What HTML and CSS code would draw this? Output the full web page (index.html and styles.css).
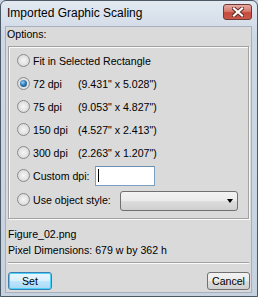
FILE: index.html
```html
<!DOCTYPE html>
<html>
<head>
<meta charset="utf-8">
<link rel="stylesheet" href="styles.css">
</head>
<body>
<div class="window">
  <div class="titlebar">
    <span class="title">Imported Graphic Scaling</span>
    <span class="close">
      <svg width="12" height="10" viewBox="0 0 12 10">
        <path d="M2 1.5 L10 8.5 M10 1.5 L2 8.5" stroke="#5b2a25" stroke-width="4" stroke-linecap="square"/>
        <path d="M2 1.5 L10 8.5 M10 1.5 L2 8.5" stroke="#ffffff" stroke-width="2.2" stroke-linecap="square"/>
      </svg>
    </span>
  </div>
  <div class="client">
    <div class="label">Options:</div>
    <div class="group">
      <div class="row"><span class="radio"></span><span>Fit in Selected Rectangle</span></div>
      <div class="row"><span class="radio checked"></span><span class="dpi">72 dpi</span><span>(9.431" x 5.028")</span></div>
      <div class="row"><span class="radio"></span><span class="dpi">75 dpi</span><span>(9.053" x 4.827")</span></div>
      <div class="row"><span class="radio"></span><span class="dpi">150 dpi</span><span>(4.527" x 2.413")</span></div>
      <div class="row"><span class="radio"></span><span class="dpi">300 dpi</span><span>(2.263" x 1.207")</span></div>
      <div class="row"><span class="radio"></span><span>Custom dpi:</span><span class="textbox"><span class="caret"></span></span></div>
      <div class="row last"><span class="radio"></span><span>Use object style:</span><span class="combo"><span class="arrow"></span></span></div>
    </div>
    <div class="info">
      <div>Figure_02.png</div>
      <div>Pixel Dimensions: 679 w by 362 h</div>
    </div>
    <div class="sep"></div>
    <div class="buttons">
      <span class="btn default">Set</span>
      <span class="btn">Cancel</span>
    </div>
  </div>
</div>
</body>
</html>
```
FILE: styles.css
```css
html, body {
  margin: 0;
  padding: 0;
  background: #c9d5e2;
}
body {
  font-family: "Liberation Sans", Arial, sans-serif;
  font-size: 10.6px;
  color: #000;
}
.window {
  width: 258px;
  height: 297px;
  box-sizing: border-box;
  border: 1px solid #4b5866;
  border-radius: 6px 6px 0 0;
  background: linear-gradient(#e2e9f1, #cdd8e5 12%, #c6d2df);
  display: flex;
  flex-direction: column;
}
.titlebar {
  height: 25px;
  flex: none;
  display: flex;
  align-items: center;
  justify-content: space-between;
  padding-left: 6px;
  padding-right: 5px;
}
.title {
  font-size: 12px;
  color: #000;
  margin-top: -1px;
}
.close {
  width: 29px;
  height: 16px;
  box-sizing: border-box;
  border: 1px solid #6e3a36;
  border-radius: 3px;
  background: linear-gradient(#e8aaa2, #d77a6f 45%, #c44a3d 55%, #c9584a);
  display: flex;
  align-items: center;
  justify-content: center;
  margin-top: -3px;
}
.client {
  flex: 1;
  margin: 0 5px 3px 4px;
  background: #dadada;
  border: 1px solid #a7b1bc;
  padding: 1px 2px 0 2px;
  display: flex;
  flex-direction: column;
}
.label {
  height: 13px;
  line-height: 13px;
  margin-left: -1px;
}
.group {
  margin-top: 5px;
  border: 1px solid #a2a2a2;
  box-shadow: inset 1px 1px 0 #fafafa, 1px 1px 0 #fafafa;
  padding: 2px 0 6px 8px;
}
.row {
  height: 23px;
  display: flex;
  align-items: center;
}
.row.last {
  height: 25px;
}
.radio {
  width: 13px;
  height: 13px;
  box-sizing: border-box;
  border-radius: 50%;
  border: 1px solid #8a8a8a;
  background: radial-gradient(circle at 50% 50%, #f6f6f6 0, #e6e6e6 45%, #cfcfcf 100%);
  margin-right: 3px;
  flex: none;
  display: flex;
  align-items: center;
  justify-content: center;
}
.radio.checked::after {
  content: "";
  width: 7px;
  height: 7px;
  border-radius: 50%;
  background: radial-gradient(circle at 40% 35%, #9fd3f7 0, #2e7ab8 45%, #12416b 100%);
}
.dpi {
  width: 45px;
  flex: none;
}
.textbox {
  width: 60px;
  height: 20px;
  box-sizing: border-box;
  margin-left: 5px;
  background: #fff;
  border: 1px solid #7c9ec1;
  border-top-color: #6b8fb5;
  display: flex;
  align-items: center;
  padding-left: 2px;
}
.caret {
  width: 1px;
  height: 13px;
  background: #000;
}
.combo {
  width: 118px;
  height: 20px;
  box-sizing: border-box;
  margin-left: 9px;
  margin-top: 2px;
  border: 1px solid #707070;
  border-radius: 3px;
  background: linear-gradient(#f3f3f3, #ebebeb 50%, #dddddd 51%, #cfcfcf);
  display: flex;
  align-items: center;
  justify-content: flex-end;
  padding-right: 4px;
}
.arrow {
  width: 0;
  height: 0;
  border-left: 3.5px solid transparent;
  border-right: 3.5px solid transparent;
  border-top: 4px solid #000;
}
.info {
  margin-top: 7px;
  line-height: 16px;
}
.sep {
  margin-top: 4px;
  height: 1px;
  background: #a2a2a2;
  border-bottom: 1px solid #fafafa;
}
.buttons {
  margin-top: 8px;
  display: flex;
  justify-content: space-between;
  margin-right: -1px;
}
.btn {
  height: 18px;
  box-sizing: border-box;
  border: 1px solid #707070;
  border-radius: 3px;
  background: linear-gradient(#f2f2f2, #ebebeb 50%, #dddddd 51%, #cfcfcf);
  display: flex;
  align-items: center;
  justify-content: center;
  width: 43px;
}
.btn.default {
  width: 44px;
  border-color: #3c7fb1;
  box-shadow: inset 0 0 0 1px #48d2fb;
  background: linear-gradient(#eaf6fd, #d9f0fc 50%, #bee6fd 51%, #a7d9f5);
}
```
